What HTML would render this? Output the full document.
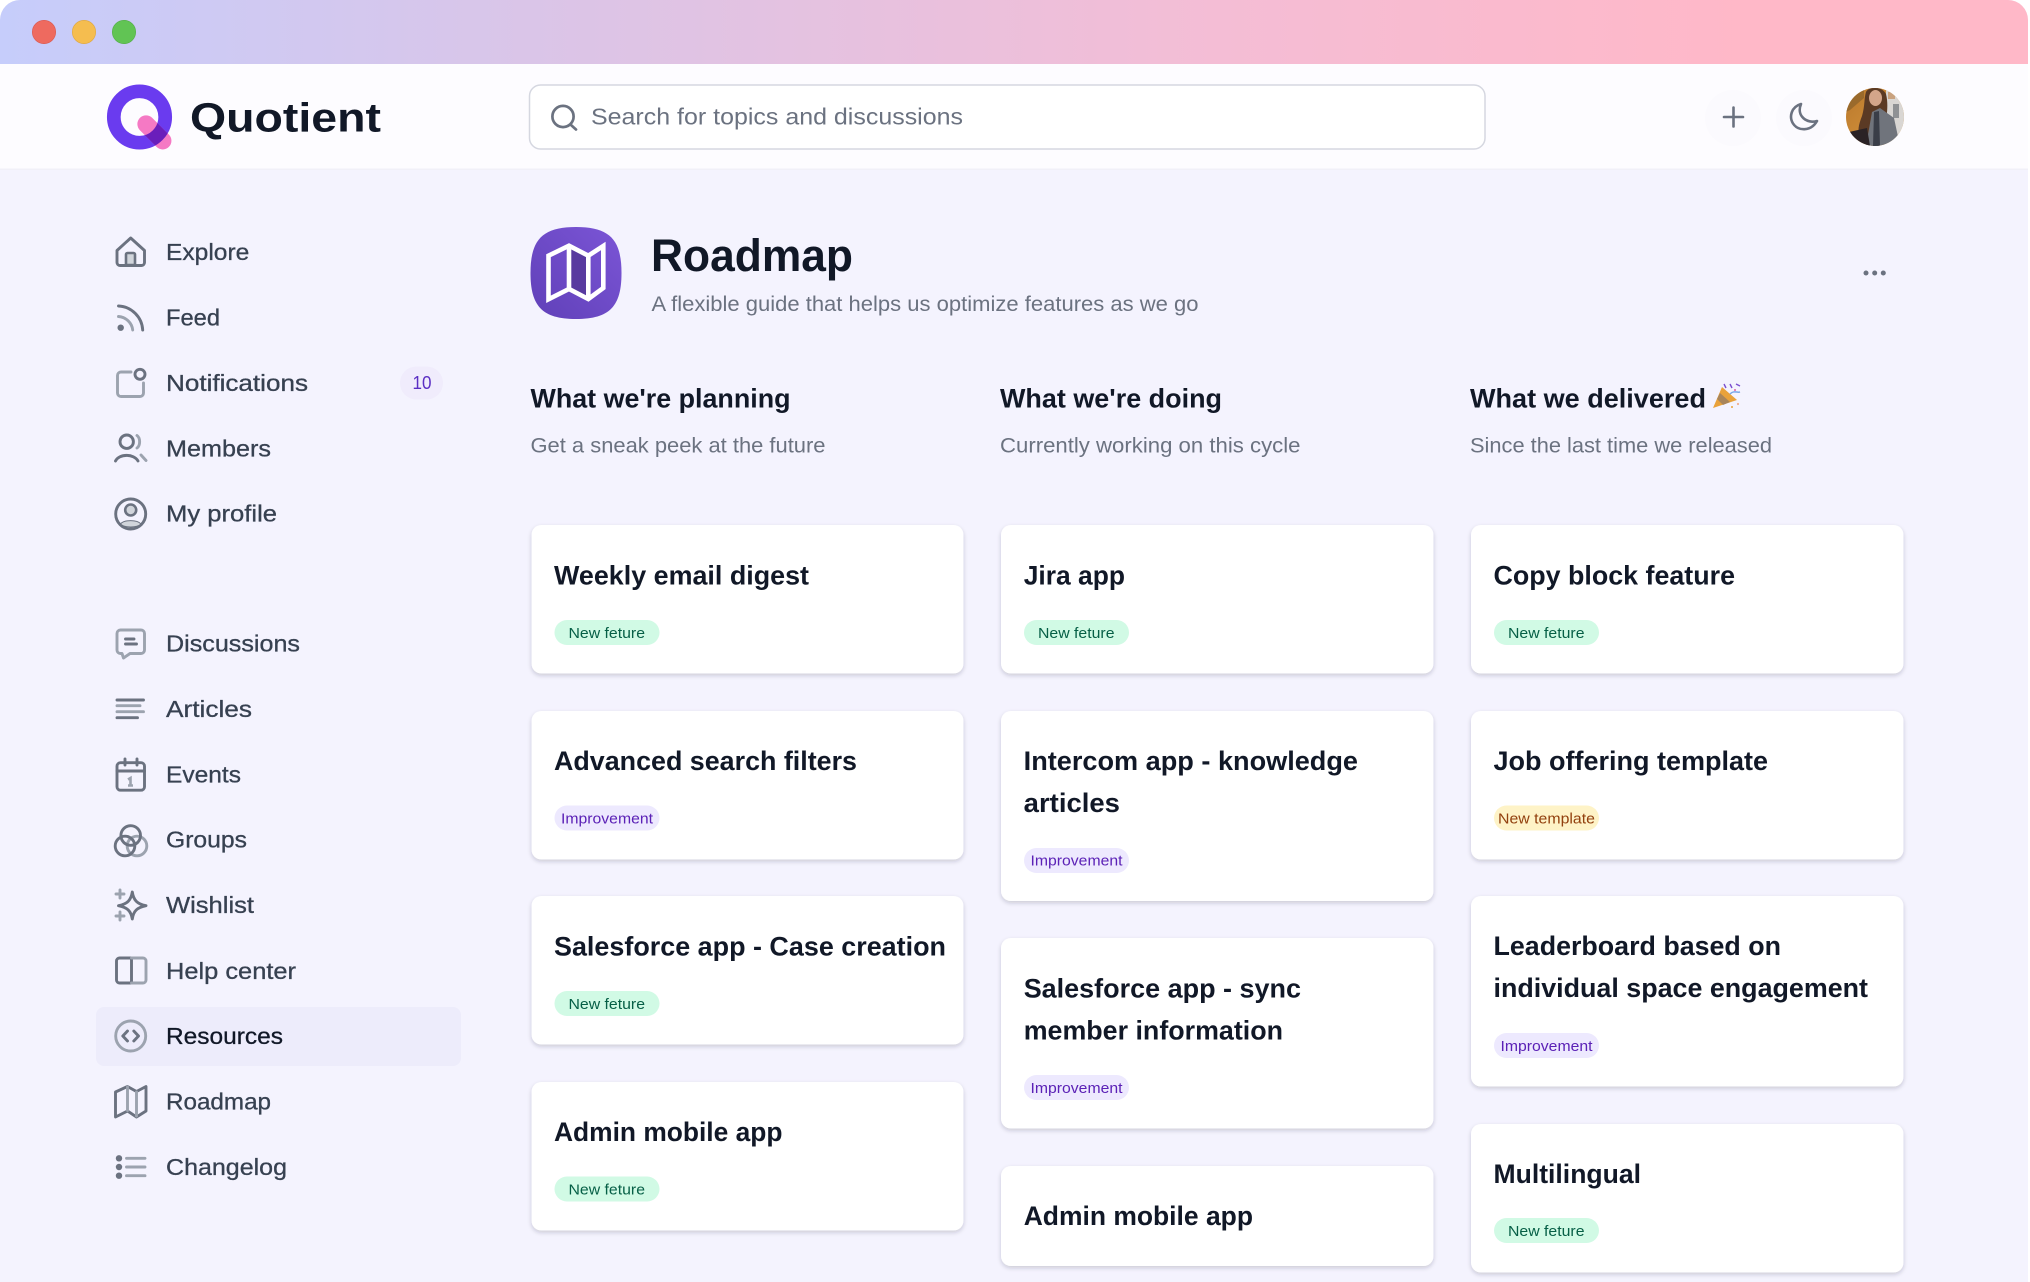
<!DOCTYPE html>
<html lang="en"><head><meta charset="utf-8"><title>Quotient - Roadmap</title>
<style>
html,body{margin:0;padding:0;background:#fff;width:2030px;height:1282px;overflow:hidden}
svg{display:block}
text{font-family:"Liberation Sans",Arial,sans-serif}
.n{font-size:23.3px;fill:#374151;stroke:#374151;stroke-width:.3px}
.t{font-size:27px;font-weight:700;fill:#111827}
.h{font-size:27px;font-weight:700;fill:#111827}
.s{font-size:21px;fill:#6b7280}
.g{font-size:14.6px;fill:#065f46}
.i{font-size:14.6px;fill:#5b21b6}
.y{font-size:14.6px;fill:#92400e}
.d{fill:none;stroke:#6b7280;stroke-width:2.9;stroke-linecap:round;stroke-linejoin:round}
.l{fill:none;stroke:#9ca3af;stroke-width:2.9;stroke-linecap:round;stroke-linejoin:round}
</style></head><body>
<svg xmlns="http://www.w3.org/2000/svg" width="2030" height="1282" viewBox="0 0 2030 1282">
<defs>
<linearGradient id="bar" x1="0" x2="1" y1="0" y2="0">
<stop offset="0" stop-color="#c6cdfb"/><stop offset=".26" stop-color="#dac5e8"/><stop offset=".6" stop-color="#f4bdd5"/><stop offset=".86" stop-color="#ffb8c8"/><stop offset="1" stop-color="#ffb8c8"/>
</linearGradient>
<linearGradient id="rm" x1="0" y1="1" x2="1" y2="0"><stop offset="0" stop-color="#6040b8"/><stop offset="1" stop-color="#7b55d6"/></linearGradient>
<linearGradient id="org" x1="0" y1="0" x2="1" y2="1"><stop offset="0" stop-color="#b9782c"/><stop offset="1" stop-color="#dc9a40"/></linearGradient>
<clipPath id="win"><path d="M0 1282V20A20 20 0 0 1 20 0H2008A20 20 0 0 1 2028 20V1282Z"/></clipPath>
<clipPath id="cap"><rect x="133.9" y="123.7" width="41" height="17.4" rx="8.7" transform="rotate(45 154.4 132.4)"/></clipPath>
<clipPath id="av"><circle cx="1875" cy="117" r="29"/></clipPath>
<filter id="sh" x="-5%" y="-5%" width="110%" height="110%"><feDropShadow dx="0" dy="2" stdDeviation="2" flood-color="#1f2937" flood-opacity=".2"/></filter>
</defs>

<g clip-path="url(#win)">
<rect width="2030" height="1282" fill="#f4f3fe"/>
<rect width="2030" height="64" fill="url(#bar)"/>
<rect y="64" width="2030" height="104.500" fill="#fdfcff"/>
<rect y="168.500" width="2030" height="1.5" fill="#f1f0f8"/>
</g>

<circle cx="44" cy="32" r="11.7" fill="#ee6a5f" stroke="#d9594f" stroke-width=".6"/>
<circle cx="84" cy="32" r="11.7" fill="#f5bd4f" stroke="#dea63f" stroke-width=".6"/>
<circle cx="124" cy="32" r="11.7" fill="#61c454" stroke="#54ad48" stroke-width=".6"/>

<!-- logo -->
<circle cx="139.5" cy="117" r="25.7" fill="none" stroke="#6a3bef" stroke-width="13.7"/>
<rect x="133.9" y="123.7" width="41" height="17.4" rx="8.7" transform="rotate(45 154.4 132.4)" fill="#f579c4"/>
<circle cx="139.5" cy="117" r="25.7" fill="none" stroke="#6a1ebb" stroke-width="13.7" clip-path="url(#cap)"/>
<text x="190" y="131.5" font-size="41" font-weight="700" fill="#111827" textLength="191" lengthAdjust="spacingAndGlyphs">Quotient</text>

<!-- search -->
<rect x="529.5" y="85" width="955.5" height="64" rx="11" fill="#fff" stroke="#d5d7e0" stroke-width="1.5"/>
<circle cx="563" cy="116.5" r="10.6" fill="none" stroke="#6b7280" stroke-width="2.7"/>
<path d="M571 125L576 129.5" fill="none" stroke="#6b7280" stroke-width="2.7" stroke-linecap="round"/>
<text x="591" y="124.3" font-size="23.3" fill="#6b7280" textLength="372" lengthAdjust="spacingAndGlyphs">Search for topics and discussions</text>

<!-- header actions -->
<circle cx="1733" cy="118" r="28" fill="#fbfafe"/>
<circle cx="1804" cy="118" r="28" fill="#fbfafe"/>
<path d="M1733.500 107.500V126.500M1724 117H1743" fill="none" stroke="#6b7280" stroke-width="2.6" stroke-linecap="round"/>
<path d="M1801 104C1791 107 1789 117 1793 123.500C1798 131.500 1811 131.500 1817 121C1807 124 1796 116 1801 104Z" fill="none" stroke="#6b7280" stroke-width="2.6" stroke-linejoin="round"/>
<g clip-path="url(#av)">
<rect x="1846" y="88" width="58" height="58" fill="url(#org)"/>
<rect x="1886" y="88" width="18" height="58" fill="#d9d6d3"/>
<rect x="1888" y="92" width="7" height="7" fill="#c9a27f"/>
<rect x="1893" y="104" width="6" height="14" fill="#8f9194"/>
<path d="M1846 88H1864V98L1850 110L1846 112Z" fill="#9a6a2c"/>
<path d="M1866 92C1869 86 1882 86 1886 94C1889 106 1886 116 1886 128L1876 138H1862C1856 132 1859 124 1862 116C1865 106 1864 98 1866 92Z" fill="#5b3a24"/>
<ellipse cx="1875.500" cy="98" rx="6.500" ry="8" fill="#d3a58a"/>
<path d="M1872 112L1880 108L1894 118L1900 146H1866Z" fill="#70747c"/>
<path d="M1874 112L1879 111L1880 146H1873Z" fill="#3a3e48"/>
<path d="M1849 132L1867 128L1870 146H1849Z" fill="#2a2225"/>
</g>

<!-- sidebar highlight -->
<rect x="96" y="1007" width="365" height="59" rx="8" fill="#edecfb"/>

<!-- nav icons -->
<!-- Explore -->
<path d="M126 265V254.500A1.500 1.500 0 0 1 127.500 253H133.500A1.500 1.500 0 0 1 135 254.500V265Z" fill="#d1d5db" stroke="#6b7280" stroke-width="2.6"/>
<path class="d" d="M117 250.500L130.700 238L144.500 250.500V262.500A3 3 0 0 1 141.500 265.500H120A3 3 0 0 1 117 262.500Z"/>
<!-- Feed -->
<circle cx="120.700" cy="327.700" r="3.200" fill="#6b7280"/>
<path class="d" d="M118.500 306C131.500 306.500 142 317 142.700 330"/>
<path class="l" d="M118.500 316.500C126 317 132 323 132.700 330"/>
<!-- Notifications -->
<path class="l" d="M131 372H121A3.500 3.500 0 0 0 117.500 375.500V393A3.500 3.500 0 0 0 121 396.500H140A3.500 3.500 0 0 0 143.500 393V383"/>
<circle cx="140" cy="374.300" r="5" class="d"/>
<!-- Members -->
<circle cx="126.700" cy="441.700" r="6.700" class="d"/>
<path class="d" d="M115.500 461C119 453.500 134 453.500 138 461"/>
<path class="l" d="M137 435.500C140.500 438 140.500 445.500 137 448M141 455L146 460.500"/>
<!-- My profile -->
<circle cx="130.700" cy="514" r="15" class="d"/>
<circle cx="130.700" cy="510" r="5.500" fill="#d1d5db" stroke="#6b7280" stroke-width="2.600"/>
<path d="M120.500 524C124 519.500 137 519.500 141 524C137 528 124.500 528 120.500 524Z" fill="#d1d5db" stroke="#6b7280" stroke-width="1"/>
<!-- Discussions -->
<path class="l" d="M120.500 630H141A3.500 3.500 0 0 1 144.500 633.500V650A3.500 3.500 0 0 1 141 653.500H130L123.500 658L122 653.500H120.500A3.500 3.500 0 0 1 117 650V633.500A3.500 3.500 0 0 1 120.500 630Z"/>
<path class="d" d="M125.500 639H134M125.500 644H136.500"/>
<!-- Articles -->
<path class="d" d="M117 700H143.500M117 717.700H137.500"/>
<path class="l" d="M117 705.700H140M117 711.700H143.500"/>
<!-- Events -->
<rect x="117" y="762.700" width="27.500" height="27.500" rx="3.500" class="d"/>
<path class="d" d="M117 771H144.500M125 759V765M137 759V765"/>
<path d="M128 779.500L130.500 778V785.500M128 785.500H133" fill="none" stroke="#9ca3af" stroke-width="2.600"/>
<!-- Groups -->
<circle cx="137" cy="846" r="9.800" class="l"/>
<circle cx="130.700" cy="835.500" r="9.800" class="d"/>
<circle cx="125" cy="846" r="9.800" class="d"/>
<!-- Wishlist -->
<path class="d" d="M132.300 892C133.500 900 137 904 146 905.700C137 907.500 133.500 911 132.300 919C131 911 127.500 907.500 118.500 905.700C127.500 904 131 900 132.300 892Z"/>
<path class="l" d="M120 890V898M116 894H124M120 912V920M116 916H124"/>
<!-- Help center -->
<path class="d" d="M131.500 958H119.500A3 3 0 0 0 116.500 961V980A3 3 0 0 0 119.500 983H131.500V958"/>
<path class="l" d="M131.500 958H143A3 3 0 0 1 146 961V980A3 3 0 0 1 143 983H131.500"/>
<!-- Resources -->
<circle cx="130.700" cy="1036" r="15" class="l"/>
<path class="d" d="M127.500 1031L122.800 1036L127.500 1041M133.800 1031L138.500 1036L133.800 1041"/>
<!-- Roadmap -->
<path class="d" d="M115.500 1092L127.500 1086.500L136.500 1091.500L146 1086.500V1111L136.500 1117L127.500 1111L115.500 1117Z"/>
<path class="l" d="M127.500 1087V1110.500M136.500 1092V1116"/>
<!-- Changelog -->
<circle cx="119" cy="1158.300" r="3.200" fill="#6b7280"/><circle cx="119" cy="1167" r="3.200" fill="#6b7280"/><circle cx="119" cy="1175.700" r="3.200" fill="#6b7280"/>
<path class="l" d="M126.500 1158.300H145M126.500 1167H145M126.500 1175.700H145"/>

<!-- nav text -->
<text class="n" x="166" y="260" textLength="83.300" lengthAdjust="spacingAndGlyphs">Explore</text>
<text class="n" x="166" y="325.700" textLength="54" lengthAdjust="spacingAndGlyphs">Feed</text>
<text class="n" x="166" y="391" textLength="142" lengthAdjust="spacingAndGlyphs">Notifications</text>
<text class="n" x="166" y="456.700" textLength="105" lengthAdjust="spacingAndGlyphs">Members</text>
<text class="n" x="166" y="521.700" textLength="111" lengthAdjust="spacingAndGlyphs">My profile</text>
<text class="n" x="166" y="651.700" textLength="134" lengthAdjust="spacingAndGlyphs">Discussions</text>
<text class="n" x="166" y="717" textLength="86" lengthAdjust="spacingAndGlyphs">Articles</text>
<text class="n" x="166" y="782.300" textLength="75" lengthAdjust="spacingAndGlyphs">Events</text>
<text class="n" x="166" y="847.700" textLength="81" lengthAdjust="spacingAndGlyphs">Groups</text>
<text class="n" x="166" y="913" textLength="88" lengthAdjust="spacingAndGlyphs">Wishlist</text>
<text class="n" x="166" y="979" textLength="130" lengthAdjust="spacingAndGlyphs">Help center</text>
<text class="n" x="166" y="1044" textLength="117" lengthAdjust="spacingAndGlyphs" style="fill:#111827;stroke:#111827">Resources</text>
<text class="n" x="166" y="1109.300" textLength="105" lengthAdjust="spacingAndGlyphs">Roadmap</text>
<text class="n" x="166" y="1175" textLength="121" lengthAdjust="spacingAndGlyphs">Changelog</text>
<rect x="400" y="366.500" width="43" height="33" rx="16.500" fill="#f0ecfc"/>
<text x="412.500" y="389" font-size="18.500" fill="#5b2fc4" textLength="19" lengthAdjust="spacingAndGlyphs">10</text>

<!-- page head -->
<path d="M576 227C610 227 621.500 240 621.500 273C621.500 306 610 319 576 319C542 319 530.500 306 530.500 273C530.500 240 542 227 576 227Z" fill="url(#rm)"/>
<path d="M569 245.700L588.300 255.700V299L569 289Z" fill="#583a9f"/>
<path d="M548.500 255.700L569 245.700L588.300 255.700L603.300 246V288L588.300 299L569 289L548.500 299.300ZM569 245.700V289M588.300 255.700V299" fill="none" stroke="#fff" stroke-width="4.600" stroke-linejoin="miter"/>
<text x="651" y="271" font-size="45" font-weight="700" fill="#111827" textLength="202" lengthAdjust="spacingAndGlyphs">Roadmap</text>
<text class="s" x="651.500" y="311" textLength="547" lengthAdjust="spacingAndGlyphs">A flexible guide that helps us optimize features as we go</text>
<circle cx="1866" cy="273" r="2.500" fill="#6b7280"/><circle cx="1874.700" cy="273" r="2.500" fill="#6b7280"/><circle cx="1883.300" cy="273" r="2.500" fill="#6b7280"/>

<!-- column heads -->
<text class="h" x="530.500" y="407.700" textLength="260" lengthAdjust="spacingAndGlyphs">What we're planning</text>
<text class="s" x="530.500" y="452.500" textLength="295" lengthAdjust="spacingAndGlyphs">Get a sneak peek at the future</text>
<text class="h" x="1000" y="407.700" textLength="222" lengthAdjust="spacingAndGlyphs">What we're doing</text>
<text class="s" x="1000" y="452.500" textLength="300.500" lengthAdjust="spacingAndGlyphs">Currently working on this cycle</text>
<text class="h" x="1470" y="407.700" textLength="236" lengthAdjust="spacingAndGlyphs">What we delivered</text>
<text class="s" x="1470" y="452.500" textLength="302" lengthAdjust="spacingAndGlyphs">Since the last time we released</text>
<!-- party popper -->
<path d="M1713 408L1722 387L1737 400Z" fill="#e9a23b"/>
<path d="M1717 399L1720 393L1730 402L1723 405Z" fill="#a9855a"/>
<path d="M1724 384L1726 388M1730 384L1732 388M1736 384L1740 386" stroke="#7b4fd0" stroke-width="1.400" fill="none"/>
<path d="M1730 394C1734 390 1737 393 1740 392" stroke="#7aa7e8" stroke-width="1.500" fill="none"/>
<circle cx="1738" cy="404" r="1.100" fill="#f0b090"/><circle cx="1732" cy="407" r="1" fill="#e9a23b"/><circle cx="1735" cy="390" r="1" fill="#e25fa5"/>

<!-- cards -->
<g filter="url(#sh)" fill="#fff">
<rect x="531.500" y="525" width="432" height="148.500" rx="10"/>
<rect x="531.500" y="711" width="432" height="148.500" rx="10"/>
<rect x="531.500" y="896" width="432" height="148.500" rx="10"/>
<rect x="531.500" y="1082" width="432" height="148.500" rx="10"/>
<rect x="1001" y="525" width="432.500" height="148.500" rx="10"/>
<rect x="1001" y="711" width="432.500" height="190" rx="10"/>
<rect x="1001" y="938" width="432.500" height="190.500" rx="10"/>
<rect x="1001" y="1166" width="432.500" height="100" rx="10"/>
<rect x="1471" y="525" width="432.500" height="148.500" rx="10"/>
<rect x="1471" y="711" width="432.500" height="148.500" rx="10"/>
<rect x="1471" y="896" width="432.500" height="190.500" rx="10"/>
<rect x="1471" y="1124" width="432.500" height="148.500" rx="10"/>
</g>

<!-- column 1 -->
<text class="t" x="554" y="584.300" textLength="255" lengthAdjust="spacingAndGlyphs">Weekly email digest</text>
<rect x="554.500" y="620" width="105" height="25" rx="12.500" fill="#d1fae5"/>
<text class="g" x="568.500" y="638" textLength="76.500" lengthAdjust="spacingAndGlyphs">New feture</text>

<text class="t" x="554" y="770" textLength="303" lengthAdjust="spacingAndGlyphs">Advanced search filters</text>
<rect x="554.500" y="805.500" width="105" height="25" rx="12.500" fill="#ede9fe"/>
<text class="i" x="561" y="823.500" textLength="92" lengthAdjust="spacingAndGlyphs">Improvement</text>

<text class="t" x="554" y="955.500" textLength="392" lengthAdjust="spacingAndGlyphs">Salesforce app - Case creation</text>
<rect x="554.500" y="991" width="105" height="25" rx="12.500" fill="#d1fae5"/>
<text class="g" x="568.500" y="1009" textLength="76.500" lengthAdjust="spacingAndGlyphs">New feture</text>

<text class="t" x="554" y="1141" textLength="228.500" lengthAdjust="spacingAndGlyphs">Admin mobile app</text>
<rect x="554.500" y="1176.500" width="105" height="25" rx="12.500" fill="#d1fae5"/>
<text class="g" x="568.500" y="1194.500" textLength="76.500" lengthAdjust="spacingAndGlyphs">New feture</text>

<!-- column 2 -->
<text class="t" x="1023.700" y="584.300" textLength="101.300" lengthAdjust="spacingAndGlyphs">Jira app</text>
<rect x="1024" y="620" width="105" height="25" rx="12.500" fill="#d1fae5"/>
<text class="g" x="1038" y="638" textLength="76.500" lengthAdjust="spacingAndGlyphs">New feture</text>

<text class="t" x="1023.700" y="770" textLength="334.300" lengthAdjust="spacingAndGlyphs">Intercom app - knowledge</text>
<text class="t" x="1023.700" y="812" textLength="96.300" lengthAdjust="spacingAndGlyphs">articles</text>
<rect x="1024" y="848" width="105" height="25" rx="12.500" fill="#ede9fe"/>
<text class="i" x="1030.500" y="865.500" textLength="92" lengthAdjust="spacingAndGlyphs">Improvement</text>

<text class="t" x="1023.700" y="997.300" textLength="277.300" lengthAdjust="spacingAndGlyphs">Salesforce app - sync</text>
<text class="t" x="1023.700" y="1039.300" textLength="259.300" lengthAdjust="spacingAndGlyphs">member information</text>
<rect x="1024" y="1075" width="105" height="25" rx="12.500" fill="#ede9fe"/>
<text class="i" x="1030.500" y="1093" textLength="92" lengthAdjust="spacingAndGlyphs">Improvement</text>

<text class="t" x="1023.700" y="1225" textLength="229.300" lengthAdjust="spacingAndGlyphs">Admin mobile app</text>

<!-- column 3 -->
<text class="t" x="1493.500" y="584.300" textLength="241.500" lengthAdjust="spacingAndGlyphs">Copy block feature</text>
<rect x="1494" y="620" width="105" height="25" rx="12.500" fill="#d1fae5"/>
<text class="g" x="1508" y="638" textLength="76.500" lengthAdjust="spacingAndGlyphs">New feture</text>

<text class="t" x="1493.500" y="770" textLength="274.500" lengthAdjust="spacingAndGlyphs">Job offering template</text>
<rect x="1494" y="805.500" width="105" height="25" rx="12.500" fill="#fef3c7"/>
<text class="y" x="1498" y="823.500" textLength="97" lengthAdjust="spacingAndGlyphs">New template</text>

<text class="t" x="1493.500" y="955" textLength="287.500" lengthAdjust="spacingAndGlyphs">Leaderboard based on</text>
<text class="t" x="1493.500" y="997" textLength="374.500" lengthAdjust="spacingAndGlyphs">individual space engagement</text>
<rect x="1494" y="1033" width="105" height="25" rx="12.500" fill="#ede9fe"/>
<text class="i" x="1500.500" y="1051" textLength="92" lengthAdjust="spacingAndGlyphs">Improvement</text>

<text class="t" x="1493.500" y="1183" textLength="147.500" lengthAdjust="spacingAndGlyphs">Multilingual</text>
<rect x="1494" y="1218" width="105" height="25" rx="12.500" fill="#d1fae5"/>
<text class="g" x="1508" y="1236" textLength="76.500" lengthAdjust="spacingAndGlyphs">New feture</text>
</svg>
</body></html>
